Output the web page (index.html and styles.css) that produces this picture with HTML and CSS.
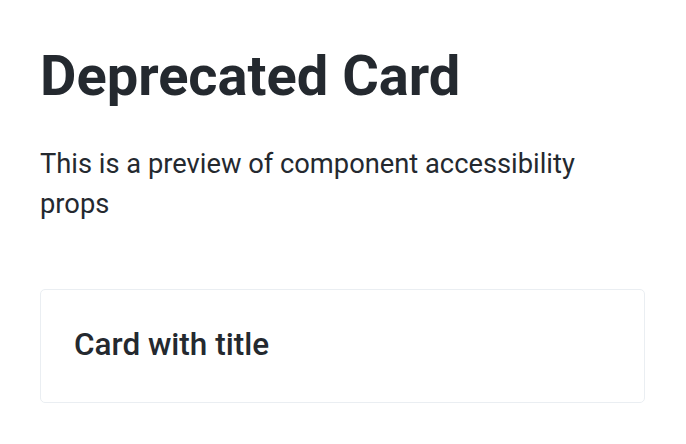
FILE: index.html
```html
<!DOCTYPE html>
<html>
<head>
<meta charset="utf-8">
<link rel="stylesheet" href="styles.css">
</head>
<body>
<main class="page">
  <h1 class="title">Deprecated Card</h1>
  <p class="lead">This is a preview of component accessibility props</p>
  <section class="card">
    <h2 class="card-title">Card with title</h2>
  </section>
</main>
</body>
</html>
```

FILE: styles.css
```css
html, body {
  margin: 0;
  background: #ffffff;
}
body {
  font-family: Roboto, "Noto Sans", sans-serif;
  color: #24292f;
}
.page {
  padding: 40px 41px 0 40px;
  width: 605px;
}
.title {
  margin: 0;
  font-size: 56px;
  font-weight: 700;
  line-height: 72px;
  color: #24292f;
}
.lead {
  margin: 32px 0 0 0;
  font-size: 27.3px;
  line-height: 40px;
  font-weight: 400;
}
.card {
  margin-top: 65px;
  border: 1px solid #eaeef2;
  border-radius: 5px;
  padding: 31px 33px 33px 33px;
  height: 48px;
}
.card-title {
  margin: 0;
  font-size: 31.5px;
  line-height: 48px;
  font-weight: 500;
}
```
